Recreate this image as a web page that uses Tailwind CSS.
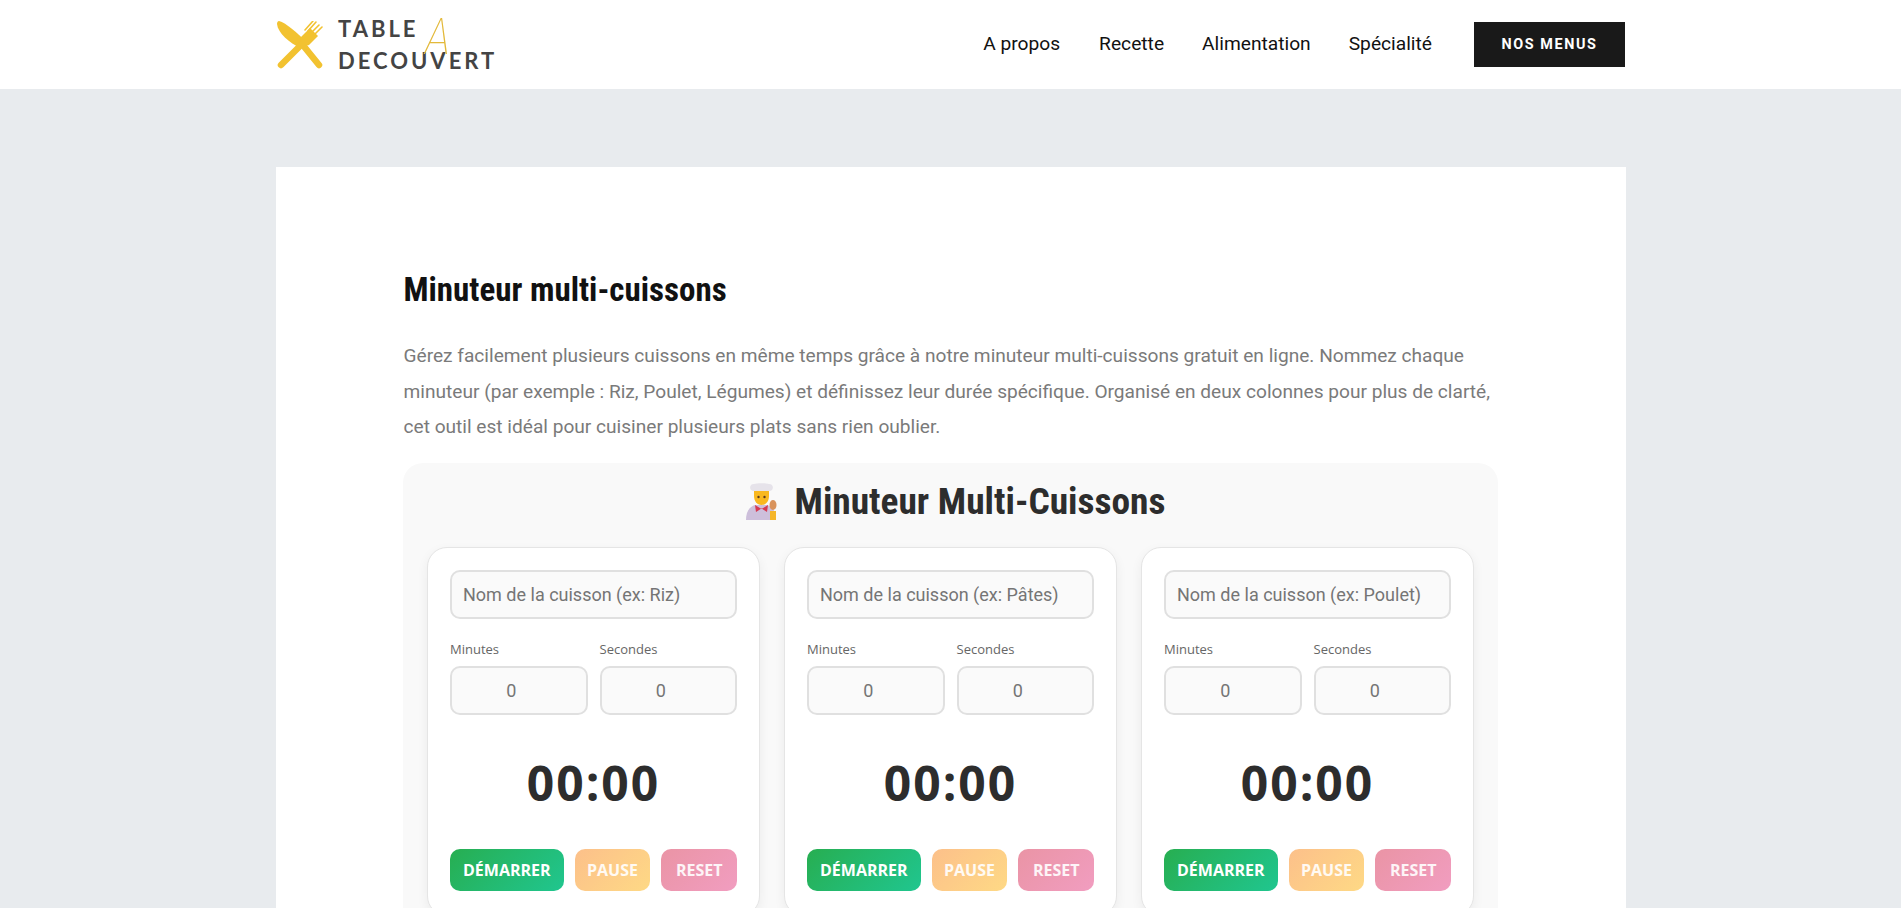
<!DOCTYPE html>
<html lang="fr">
<head>
<meta charset="UTF-8" />
<title>Minuteur multi-cuissons</title>
<script src="https://cdn.jsdelivr.net/npm/@tailwindcss/browser@4"></script>
</head>
<body class="bg-[#e8ebee] h-screen overflow-hidden font-['Roboto',sans-serif]">
  <!-- Header -->
  <header class="bg-white h-[89px]">
    <div class="w-[1350px] mx-auto h-full flex items-center justify-between">
      <a href="#" class="flex items-center gap-[15px] pl-[1.5px]">
        <svg class="w-[46px] h-[48px]" viewBox="0 0 46 48" fill="none">
          <path d="M2 0C9 2 21 12 29 21L24 27C12 22 1 12 0 3C0 1 1 0 2 0Z" fill="#f2c230" />
          <path d="M25 23L42 44" stroke="#f2c230" stroke-width="6.5" stroke-linecap="round" />
          <path d="M26 22L4 44" stroke="#f2c230" stroke-width="6.5" stroke-linecap="round" />
          <path d="M24 16L33 7L41 15L32 24C29 26 22 20 24 16Z" fill="#f2c230" />
          <path d="M31 10L39 1M34 12L42 4M37 14L45 6M28 9L36 0" stroke="#f2c230" stroke-width="1.6" stroke-linecap="round" />
        </svg>
        <div class="relative font-['Lato',sans-serif] font-bold text-[#444] text-[22px] leading-[32px] tracking-[3px]">
          <div>TABLE</div>
          <div>DECOUVERT</div>
          <span class="absolute left-[87px] top-[-1px] font-['Roboto',sans-serif] italic font-thin [font-stretch:75%] text-[50px] leading-[50px] tracking-normal text-[#e3b93a]">A</span>
        </div>
      </a>
      <nav class="flex items-center text-[19.2px] text-[#111] mr-[0.5px]">
        <a href="#" class="mr-[39px]">A propos</a>
        <a href="#" class="mr-[38px]">Recette</a>
        <a href="#" class="mr-[38px]">Alimentation</a>
        <a href="#" class="mr-[42px]">Spécialité</a>
        <a href="#" class="w-[151px] h-[45px] bg-[#191919] text-white text-[14.4px] font-bold tracking-[1.6px] flex items-center justify-center">NOS MENUS</a>
      </nav>
    </div>
  </header>

  <!-- Main content -->
  <main class="w-[1350px] mx-auto mt-[78px] bg-white px-[127.5px] pt-[100px] pb-10">
    <h2 class="pl-[0.5px] font-['Roboto',sans-serif] font-bold [font-stretch:75%] text-[33px] leading-[46px] text-[#111]">Minuteur multi-cuissons</h2>
    <p class="pl-[0.5px] mt-[25px] text-[19.13px] leading-[35.5px] text-[#7a7a7a]">Gérez facilement plusieurs cuissons en même temps grâce à notre minuteur multi-cuissons gratuit en ligne. Nommez chaque minuteur (par exemple : Riz, Poulet, Légumes) et définissez leur durée spécifique. Organisé en deux colonnes pour plus de clarté, cet outil est idéal pour cuisiner plusieurs plats sans rien oublier.</p>

    <section class="mt-[18.5px] bg-[#f9f9f9] rounded-[20px] px-[24px] pt-[13px] pb-6">
      <div class="flex items-center justify-center gap-[18px] h-[50px] pl-[10px]">
        <svg class="w-[31px] h-[37px]" viewBox="0 0 31 37" fill="none">
          <path d="M0 37C0 29 3 24 9 22L21 22C27 24 30 29 30 37Z" fill="#cdbfdb" />
          <path d="M8 7H23V13C23 18 20 22 15.5 22C11 22 8 18 8 13Z" fill="#f9b81f" />
          <path d="M7 8C3 7 3 1 8 1C11 0 20 0 23 1C28 1 28 7 24 8Z" fill="#e6e3ea" />
          <path d="M9 22L15.5 26L22 22L21 29L15.5 25.5L10 29Z" fill="#d63a52" />
          <circle cx="12.5" cy="14" r="1.2" fill="#5a3a20" />
          <circle cx="18.5" cy="14" r="1.2" fill="#5a3a20" />
          <rect x="24" y="28" width="6" height="9" fill="#f5b62a" />
          <ellipse cx="27" cy="22" rx="3.5" ry="5" fill="#d9935c" />
        </svg>
        <h3 class="font-['Roboto',sans-serif] font-bold [font-stretch:75%] text-[37.4px] leading-[50px] text-[#2d2d2d]">Minuteur Multi-Cuissons</h3>
      </div>

      <div class="mt-[21px] grid grid-cols-3 gap-[24px]">
        <!-- Card 1 -->
        <div class="bg-white border border-[#e5e5e5] rounded-[20px] shadow-[0_4px_12px_rgba(0,0,0,0.06)] px-[22px] pt-[22px] pb-6">
          <input type="text" placeholder="Nom de la cuisson (ex: Riz)" class="w-full h-[49px] bg-[#fafafa] border-2 border-[#e0e0e0] rounded-[10px] px-[11px] pb-[1px] text-[18px] placeholder:text-[#757575]" />
          <div class="mt-[21px] grid grid-cols-2 gap-[12px]">
            <div>
              <label class="block font-['Open_Sans',sans-serif] text-[13px] leading-[18px] text-[#666] mb-[8px]">Minutes</label>
              <input type="number" value="0" class="w-full h-[49px] bg-[#fafafa] border-2 border-[#e0e0e0] rounded-[10px] px-[12px] text-[18px] text-center text-[#757575]" />
            </div>
            <div>
              <label class="block font-['Open_Sans',sans-serif] text-[13px] leading-[18px] text-[#666] mb-[8px]">Secondes</label>
              <input type="number" value="0" class="w-full h-[49px] bg-[#fafafa] border-2 border-[#e0e0e0] rounded-[10px] px-[12px] text-[18px] text-center text-[#757575]" />
            </div>
          </div>
          <div class="mt-[35px] text-center font-['Open_Sans',sans-serif] font-bold text-[48px] tracking-[2px] leading-[66px] text-[#2d2d2d]">00:00</div>
          <div class="mt-[33px] flex gap-[11px] font-['Open_Sans',sans-serif] font-bold text-[16px] text-white">
            <button class="w-[114px] h-[42px] rounded-[10px] bg-linear-135 from-[#27ae50] to-[#20c68f]">DÉMARRER</button>
            <button class="w-[76px] h-[42px] rounded-[10px] bg-linear-135 from-[#fcc08a] to-[#fed985] text-white/90">PAUSE</button>
            <button class="w-[76px] h-[42px] rounded-[10px] bg-linear-135 from-[#ea94a5] to-[#f19dc0] text-white/90">RESET</button>
          </div>
        </div>
        <!-- Card 2 -->
        <div class="bg-white border border-[#e5e5e5] rounded-[20px] shadow-[0_4px_12px_rgba(0,0,0,0.06)] px-[22px] pt-[22px] pb-6">
          <input type="text" placeholder="Nom de la cuisson (ex: Pâtes)" class="w-full h-[49px] bg-[#fafafa] border-2 border-[#e0e0e0] rounded-[10px] px-[11px] pb-[1px] text-[18px] placeholder:text-[#757575]" />
          <div class="mt-[21px] grid grid-cols-2 gap-[12px]">
            <div>
              <label class="block font-['Open_Sans',sans-serif] text-[13px] leading-[18px] text-[#666] mb-[8px]">Minutes</label>
              <input type="number" value="0" class="w-full h-[49px] bg-[#fafafa] border-2 border-[#e0e0e0] rounded-[10px] px-[12px] text-[18px] text-center text-[#757575]" />
            </div>
            <div>
              <label class="block font-['Open_Sans',sans-serif] text-[13px] leading-[18px] text-[#666] mb-[8px]">Secondes</label>
              <input type="number" value="0" class="w-full h-[49px] bg-[#fafafa] border-2 border-[#e0e0e0] rounded-[10px] px-[12px] text-[18px] text-center text-[#757575]" />
            </div>
          </div>
          <div class="mt-[35px] text-center font-['Open_Sans',sans-serif] font-bold text-[48px] tracking-[2px] leading-[66px] text-[#2d2d2d]">00:00</div>
          <div class="mt-[33px] flex gap-[11px] font-['Open_Sans',sans-serif] font-bold text-[16px] text-white">
            <button class="w-[114px] h-[42px] rounded-[10px] bg-linear-135 from-[#27ae50] to-[#20c68f]">DÉMARRER</button>
            <button class="w-[76px] h-[42px] rounded-[10px] bg-linear-135 from-[#fcc08a] to-[#fed985] text-white/90">PAUSE</button>
            <button class="w-[76px] h-[42px] rounded-[10px] bg-linear-135 from-[#ea94a5] to-[#f19dc0] text-white/90">RESET</button>
          </div>
        </div>
        <!-- Card 3 -->
        <div class="bg-white border border-[#e5e5e5] rounded-[20px] shadow-[0_4px_12px_rgba(0,0,0,0.06)] px-[22px] pt-[22px] pb-6">
          <input type="text" placeholder="Nom de la cuisson (ex: Poulet)" class="w-full h-[49px] bg-[#fafafa] border-2 border-[#e0e0e0] rounded-[10px] px-[11px] pb-[1px] text-[18px] placeholder:text-[#757575]" />
          <div class="mt-[21px] grid grid-cols-2 gap-[12px]">
            <div>
              <label class="block font-['Open_Sans',sans-serif] text-[13px] leading-[18px] text-[#666] mb-[8px]">Minutes</label>
              <input type="number" value="0" class="w-full h-[49px] bg-[#fafafa] border-2 border-[#e0e0e0] rounded-[10px] px-[12px] text-[18px] text-center text-[#757575]" />
            </div>
            <div>
              <label class="block font-['Open_Sans',sans-serif] text-[13px] leading-[18px] text-[#666] mb-[8px]">Secondes</label>
              <input type="number" value="0" class="w-full h-[49px] bg-[#fafafa] border-2 border-[#e0e0e0] rounded-[10px] px-[12px] text-[18px] text-center text-[#757575]" />
            </div>
          </div>
          <div class="mt-[35px] text-center font-['Open_Sans',sans-serif] font-bold text-[48px] tracking-[2px] leading-[66px] text-[#2d2d2d]">00:00</div>
          <div class="mt-[33px] flex gap-[11px] font-['Open_Sans',sans-serif] font-bold text-[16px] text-white">
            <button class="w-[114px] h-[42px] rounded-[10px] bg-linear-135 from-[#27ae50] to-[#20c68f]">DÉMARRER</button>
            <button class="w-[76px] h-[42px] rounded-[10px] bg-linear-135 from-[#fcc08a] to-[#fed985] text-white/90">PAUSE</button>
            <button class="w-[76px] h-[42px] rounded-[10px] bg-linear-135 from-[#ea94a5] to-[#f19dc0] text-white/90">RESET</button>
          </div>
        </div>
      </div>
    </section>
  </main>
</body>
</html>
